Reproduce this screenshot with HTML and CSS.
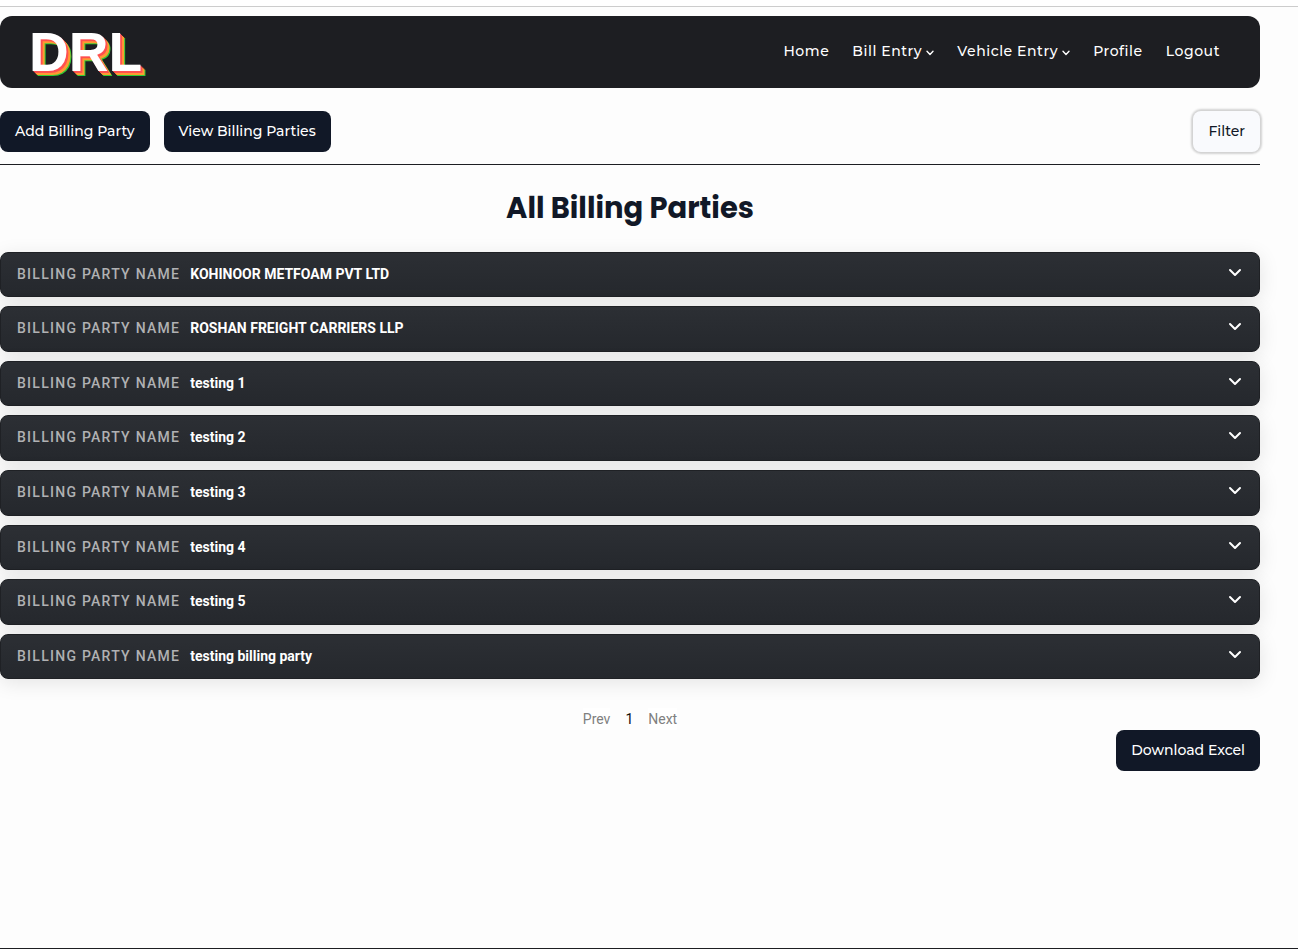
FILE: index.html
```html
<!DOCTYPE html>
<html lang="en">
<head>
<meta charset="utf-8">
<meta name="viewport" content="width=device-width, initial-scale=1">
<title>All Billing Parties</title>
<link rel="stylesheet" href="styles.css">
</head>
<body>
<div class="page">
  <header class="navbar">
    <a class="logo" href="#">DRL</a>
    <nav class="menu" aria-label="Main">
      <a href="#">Home</a>
      <a href="#">Bill Entry<svg class="caret" viewBox="0 0 8 6" aria-hidden="true"><path d="M1 1.2 4 4.4 7 1.2"/></svg></a>
      <a href="#">Vehicle Entry<svg class="caret" viewBox="0 0 8 6" aria-hidden="true"><path d="M1 1.2 4 4.4 7 1.2"/></svg></a>
      <a href="#">Profile</a>
      <a href="#">Logout</a>
    </nav>
  </header>

  <div class="toolbar">
    <button class="btn" type="button">Add Billing Party</button>
    <button class="btn" type="button">View Billing Parties</button>
    <button class="btn btn-light" type="button">Filter</button>
  </div>

  <main>
    <h1 class="title">All Billing Parties</h1>
    <div class="parties">
      <button class="party" type="button"><span class="label">BILLING PARTY NAME</span><span class="name">KOHINOOR METFOAM PVT LTD</span><svg class="chevron" viewBox="0 0 14 10" aria-hidden="true"><path d="M2 2 7 7 12 2"/></svg></button>
      <button class="party" type="button"><span class="label">BILLING PARTY NAME</span><span class="name">ROSHAN FREIGHT CARRIERS LLP</span><svg class="chevron" viewBox="0 0 14 10" aria-hidden="true"><path d="M2 2 7 7 12 2"/></svg></button>
      <button class="party" type="button"><span class="label">BILLING PARTY NAME</span><span class="name">testing 1</span><svg class="chevron" viewBox="0 0 14 10" aria-hidden="true"><path d="M2 2 7 7 12 2"/></svg></button>
      <button class="party" type="button"><span class="label">BILLING PARTY NAME</span><span class="name">testing 2</span><svg class="chevron" viewBox="0 0 14 10" aria-hidden="true"><path d="M2 2 7 7 12 2"/></svg></button>
      <button class="party" type="button"><span class="label">BILLING PARTY NAME</span><span class="name">testing 3</span><svg class="chevron" viewBox="0 0 14 10" aria-hidden="true"><path d="M2 2 7 7 12 2"/></svg></button>
      <button class="party" type="button"><span class="label">BILLING PARTY NAME</span><span class="name">testing 4</span><svg class="chevron" viewBox="0 0 14 10" aria-hidden="true"><path d="M2 2 7 7 12 2"/></svg></button>
      <button class="party" type="button"><span class="label">BILLING PARTY NAME</span><span class="name">testing 5</span><svg class="chevron" viewBox="0 0 14 10" aria-hidden="true"><path d="M2 2 7 7 12 2"/></svg></button>
      <button class="party" type="button"><span class="label">BILLING PARTY NAME</span><span class="name">testing billing party</span><svg class="chevron" viewBox="0 0 14 10" aria-hidden="true"><path d="M2 2 7 7 12 2"/></svg></button>
    </div>
    <nav class="pager" aria-label="Pagination">
      <button type="button" disabled>Prev</button>
      <span class="current">1</span>
      <button type="button" disabled>Next</button>
    </nav>
    <div class="export">
      <button class="btn" type="button">Download Excel</button>
    </div>
  </main>
</div>
</body>
</html>
```
FILE: styles.css
```css
* { box-sizing: border-box; }

body {
  margin: 0;
  border-top: 6px solid #fff;
  background: #fdfdfd;
  color: #111827;
  font-family: Montserrat, Inter, sans-serif;
  font-size: 14px;
}

button { font: inherit; cursor: pointer; }

.page {
  min-height: calc(100vh - 6px);
  padding: 9px 38px 24px 0;
  border-top: 1px solid #ccc;
  border-bottom: 1px solid #1d1e22;
}

.navbar {
  display: flex;
  align-items: center;
  justify-content: space-between;
  height: 72px;
  padding: 0 40px 2px 29px;
  border-radius: 12px;
  background: #1d1e22;
}

.logo {
  padding-top: 2px;
  color: #fff;
  font: bold 55px/70px "Liberation Sans", Arial, sans-serif;
  text-decoration: none;
  text-shadow: 1px 1px #ff5050, 2px 2px #ff5050, 3px 3px #ff9933, 4px 4px #ff9933, 5px 5px #33cc33;
}

.menu {
  display: flex;
  gap: 23px;
}

.menu a {
  color: #fff;
  font-weight: 500;
  letter-spacing: 0.04em;
  line-height: 20px;
  text-decoration: none;
  white-space: nowrap;
}

.caret, .chevron {
  fill: none;
  stroke: currentColor;
  stroke-linecap: round;
  stroke-linejoin: round;
}

.caret {
  width: 8px;
  height: 6px;
  margin-left: 4px;
  stroke-width: 1.4;
}

.toolbar {
  display: flex;
  gap: 14px;
  padding: 23px 0 12px;
  border-bottom: 1px solid #1d1e22;
}

.btn {
  padding: 10px 15px;
  border: 0;
  border-radius: 8px;
  background: #111827;
  color: #fff;
  font-weight: 500;
  line-height: 21px;
  white-space: nowrap;
}

.btn-light {
  margin-left: auto;
  background: #f9fafd;
  color: #111827;
  box-shadow: 0 0 2px 2px #d2d2d2;
}

.title {
  margin: 23px 0;
  font: bold 29px/1.4 Poppins, Inter, sans-serif;
  text-align: center;
}

.parties {
  display: grid;
  gap: 9px;
  font-family: Roboto, sans-serif;
}

.party {
  display: flex;
  gap: 10px;
  width: 100%;
  padding: 12px 17px 12px 16px;
  border: 1px solid #1f2125;
  border-radius: 8px;
  background: linear-gradient(#2c2f34, #25282d);
  box-shadow: 0 4px 20px rgba(0, 0, 0, 0.1);
  color: #fff;
  font-size: 14px;
  line-height: 1.4;
  text-align: left;
}

.label {
  color: #b0b1b3;
  font-weight: 500;
  letter-spacing: 0.09em;
}

.name { font-weight: 700; }

.chevron {
  width: 14px;
  height: 10px;
  margin: 3px 0 0 auto;
  stroke-width: 2;
}

.pager {
  display: flex;
  justify-content: center;
  gap: 15px;
  margin-top: 29px;
  font: 14px/22px Roboto, sans-serif;
}

.pager button {
  padding: 0;
  border: 0;
  background: #fff;
  color: #808080;
}

.current { color: #111; }

.export {
  display: flex;
  justify-content: flex-end;
}
```
